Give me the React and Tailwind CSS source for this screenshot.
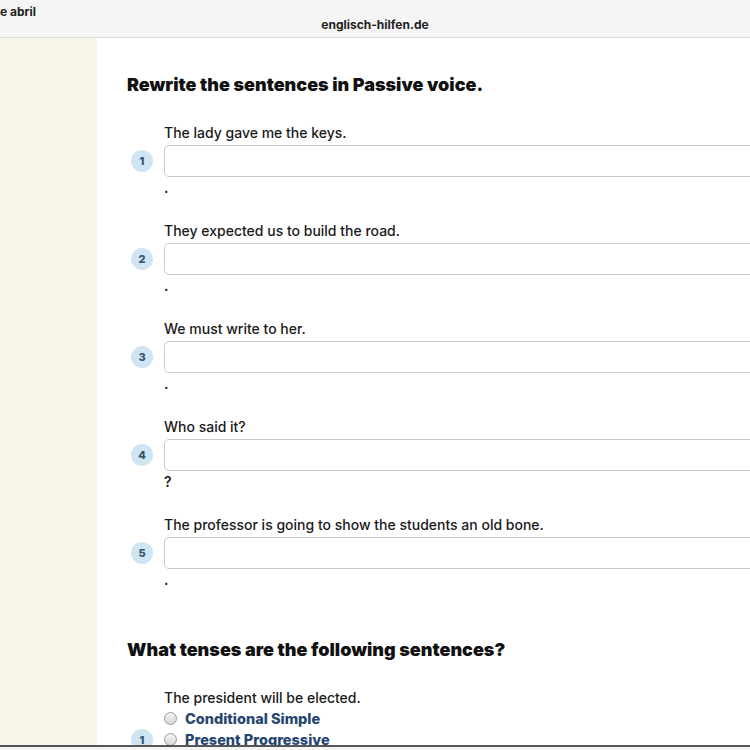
const passiveItems = [
  { n: 1, text: 'The lady gave me the keys.', end: '.' },
  { n: 2, text: 'They expected us to build the road.', end: '.' },
  { n: 3, text: 'We must write to her.', end: '.' },
  { n: 4, text: 'Who said it?', end: '?' },
  { n: 5, text: 'The professor is going to show the students an old bone.', end: '.' },
]

const tenseOptions = ['Conditional Simple', 'Present Progressive']

const NumberBadge = ({ n }) => (
  <div className="ml-[4px] flex h-[22px] w-[22px] items-center justify-center rounded-full bg-[#cfe5f3] text-[11px] font-extrabold text-[#34526e]">
    {n}
  </div>
)

const RewriteItem = ({ item }) => (
  <div>
    <p className="ml-[37px] text-[14px] font-medium leading-[20px] text-[#1a1a1a]">{item.text}</p>
    <div className="mt-[2px] flex items-center">
      <div className="w-[37px] shrink-0">
        <NumberBadge n={item.n} />
      </div>
      <input
        type="text"
        className="-mr-[12px] h-[32px] flex-1 rounded-[5px] border-[1.5px] border-[#c9c9c9] bg-white outline-none"
      />
    </div>
    <p className="ml-[37px] mt-[1px] text-[14px] font-semibold leading-[20px] text-[#1a1a1a]">{item.end}</p>
  </div>
)

const Radio = () => (
  <span className="inline-block h-[13px] w-[13px] shrink-0 rounded-full border border-[#9a9a9a] bg-gradient-to-b from-[#f4f4f4] to-[#d6d6d6]" />
)

export default function App() {
  return (
    <div className="relative h-[750px] w-[750px] overflow-hidden bg-white font-['Inter','Noto_Sans',sans-serif]">
      {/* browser address bar */}
      <div className="relative h-[38px] border-b border-[#dcdcdc] bg-[#f5f5f5]">
        <span className="absolute left-0 top-[3px] text-[12px] font-bold text-[#222]">e abril</span>
        <div className="flex h-full items-end justify-center pb-[3px]">
          <span className="text-[12px] font-bold text-[#222]">englisch-hilfen.de</span>
        </div>
      </div>

      <div className="flex h-[712px]">
        <aside className="w-[97px] shrink-0 bg-[#f8f4ea]" />

        <main className="flex-1 pl-[30px] pt-[35px]">
          <h2 className="text-[18px] font-black leading-[24px] text-[#111]">
            Rewrite the sentences in Passive voice.
          </h2>

          <div className="mt-[26px] flex flex-col gap-[23px]">
            {passiveItems.map((item) => (
              <RewriteItem key={item.n} item={item} />
            ))}
          </div>

          <h2 className="mt-[48px] text-[18px] font-black leading-[24px] text-[#111]">
            What tenses are the following sentences?
          </h2>

          <div className="mt-[26px]">
            <p className="ml-[37px] text-[14px] font-medium leading-[20px] text-[#1a1a1a]">
              The president will be elected.
            </p>
            <div className="flex">
              <div className="w-[37px] shrink-0 pt-[21px]">
                <NumberBadge n={1} />
              </div>
              <div className="flex flex-col">
                {tenseOptions.map((opt) => (
                  <label key={opt} className="flex h-[21px] items-center gap-[8px]">
                    <Radio />
                    <span className="text-[14.5px] font-extrabold text-[#26466f]">{opt}</span>
                  </label>
                ))}
              </div>
            </div>
          </div>
        </main>
      </div>

      {/* bottom edge of the viewport */}
      <div className="absolute left-0 right-0 top-[745px] h-[2px] bg-[#555]" />
      <div className="absolute bottom-0 left-0 right-0 h-[3px] bg-[#f4f4f4]" />
    </div>
  )
}
